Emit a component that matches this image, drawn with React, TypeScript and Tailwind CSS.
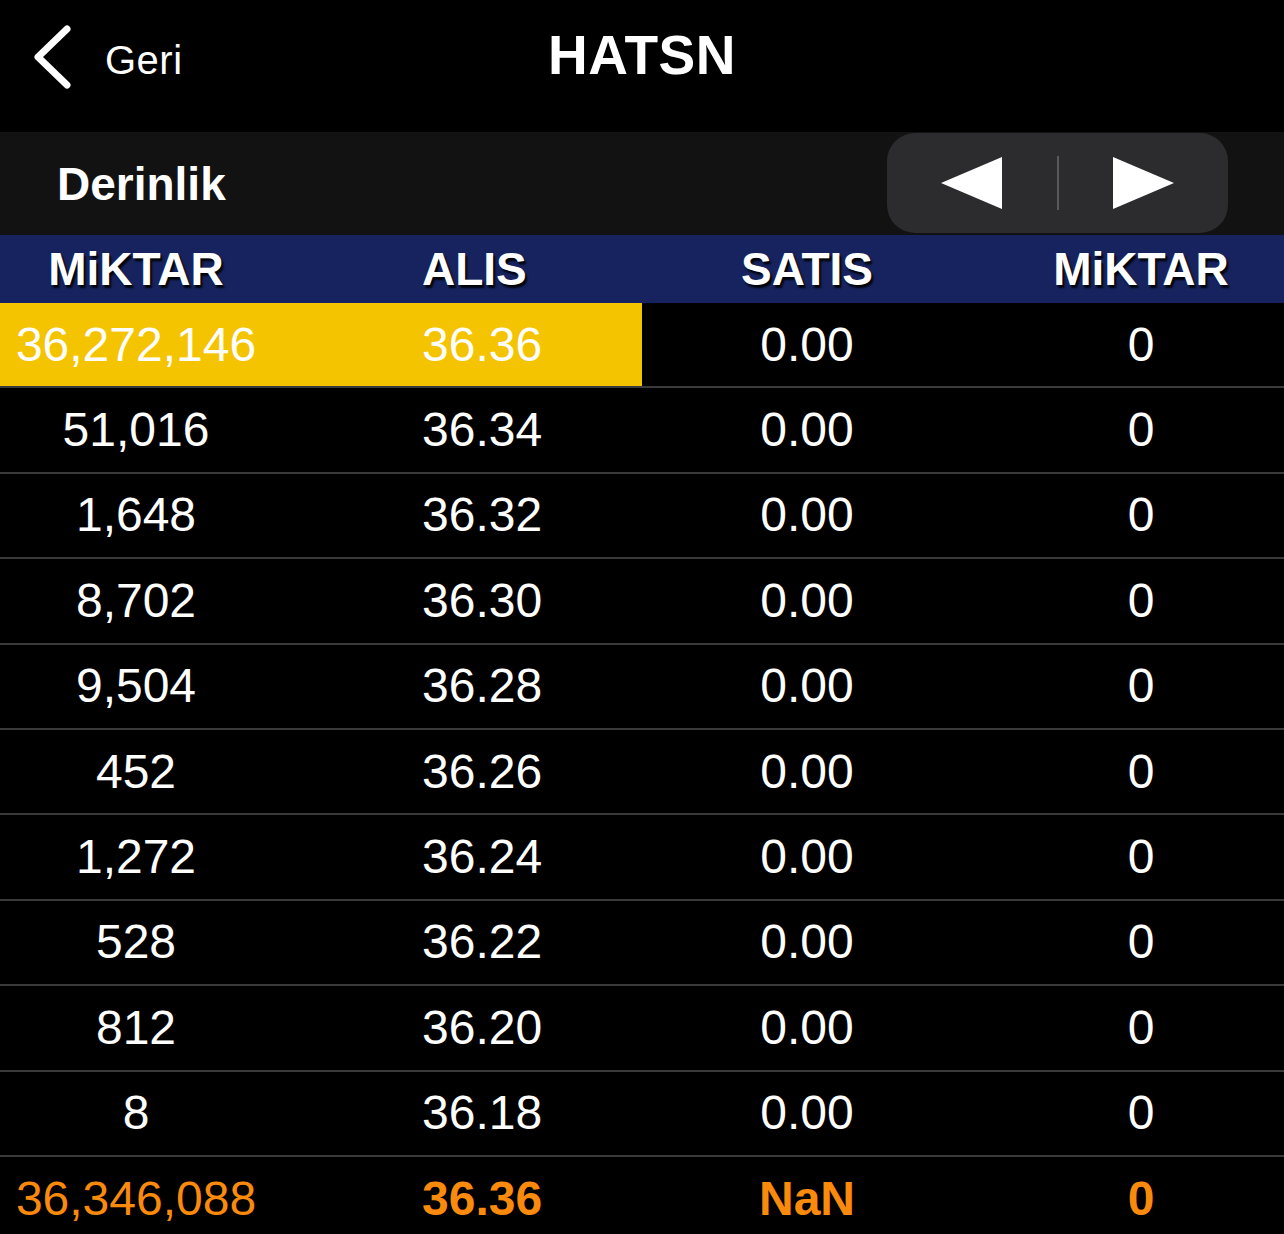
import React from "react";

type Row = { qty: string; bid: string; ask: string; askQty: string };

const ROWS: Row[] = [
  { qty: "36,272,146", bid: "36.36", ask: "0.00", askQty: "0" },
  { qty: "51,016", bid: "36.34", ask: "0.00", askQty: "0" },
  { qty: "1,648", bid: "36.32", ask: "0.00", askQty: "0" },
  { qty: "8,702", bid: "36.30", ask: "0.00", askQty: "0" },
  { qty: "9,504", bid: "36.28", ask: "0.00", askQty: "0" },
  { qty: "452", bid: "36.26", ask: "0.00", askQty: "0" },
  { qty: "1,272", bid: "36.24", ask: "0.00", askQty: "0" },
  { qty: "528", bid: "36.22", ask: "0.00", askQty: "0" },
  { qty: "812", bid: "36.20", ask: "0.00", askQty: "0" },
  { qty: "8", bid: "36.18", ask: "0.00", askQty: "0" },
];

const font = "font-['Liberation_Sans',Arial,sans-serif]";

export default function App() {
  return (
    <div className={`h-[1234px] w-[1284px] overflow-hidden bg-black text-white ${font}`}>
      {/* Nav bar */}
      <div className="relative flex h-[132px] items-center">
        <div className="flex items-center pb-[18px] pl-[33px]">
          <svg width="38" height="64" viewBox="0 0 38 64" fill="none">
            <path d="M34 4 L5 32 L34 60" stroke="white" strokeWidth="7" strokeLinecap="round" strokeLinejoin="round" />
          </svg>
          <span className="ml-[34px] pt-[6px] text-[40px] leading-none tracking-[0.5px]">Geri</span>
        </div>
        <div className="absolute left-0 right-0 top-[28px] text-center text-[55px] font-bold leading-none tracking-[0.5px]">
          HATSN
        </div>
      </div>

      {/* Derinlik bar */}
      <div className="flex h-[103px] items-center justify-between bg-[#121212]">
        <span className="pl-[57px] text-[46px] font-bold leading-none">Derinlik</span>
        <div className="mr-[56px] mt-[1px] flex h-[100px] w-[341px] items-center justify-between self-start rounded-[28px] bg-[#2c2c2e] px-[54px]">
          <svg width="62" height="52" viewBox="0 0 62 52">
            <polygon points="0,26 61,0 61,52" fill="white" />
          </svg>
          <div className="h-[54px] w-[2px] bg-[#5a5a5e]" />
          <svg width="62" height="52" viewBox="0 0 62 52">
            <polygon points="62,26 1,0 1,52" fill="white" />
          </svg>
        </div>
      </div>

      {/* Column header */}
      <div className="flex h-[68px] items-center bg-[#16235f] text-[46px] font-bold leading-none [text-shadow:2px_3px_2px_rgba(0,0,0,0.9)]">
        <div className="w-[272px] text-center">MiKTAR</div>
        <div className="w-[370px] pl-[150px]">ALIS</div>
        <div className="w-[330px] text-center">SATIS</div>
        <div className="w-[312px] pl-[26px] text-center">MiKTAR</div>
      </div>

      {/* Rows */}
      {ROWS.map((r, i) => (
        <div key={i} className="flex h-[85.4px] items-center border-b-2 border-[#3a3a3a] text-[48px] leading-none">
          <div className={`flex h-full w-[642px] items-center ${i === 0 ? "bg-[#f5c400]" : ""}`}>
            <div className="w-[272px] text-center">{r.qty}</div>
            <div className="w-[370px] pl-[150px]">{r.bid}</div>
          </div>
          <div className="w-[330px] text-center">{r.ask}</div>
          <div className="w-[312px] pl-[26px] text-center">{r.askQty}</div>
        </div>
      ))}

      {/* Total row */}
      <div className="flex h-[85px] items-center text-[48px] leading-none text-[#f98a0c]">
        <div className="w-[272px] text-center">36,346,088</div>
        <div className="w-[370px] pl-[150px] font-bold">36.36</div>
        <div className="w-[330px] text-center font-bold">NaN</div>
        <div className="w-[312px] pl-[26px] text-center font-bold">0</div>
      </div>
    </div>
  );
}
